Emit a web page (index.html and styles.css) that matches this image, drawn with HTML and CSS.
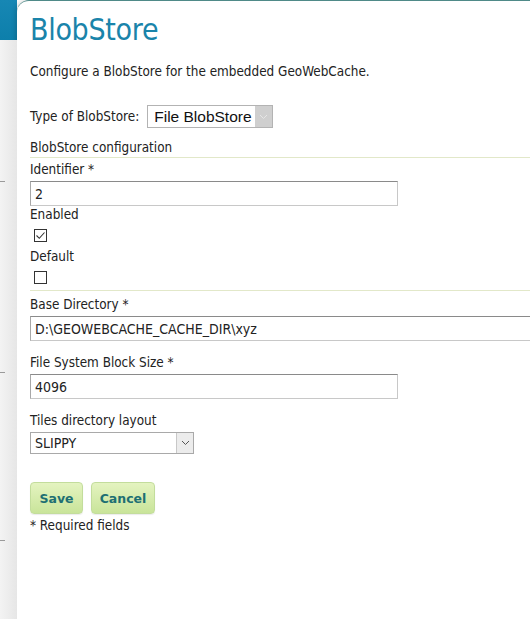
FILE: index.html
```html
<!DOCTYPE html>
<html>
<head>
<meta charset="utf-8">
<link rel="stylesheet" href="styles.css">
</head>
<body>
<div class="page">
  <aside class="rail">
    <div class="rail-head"></div>
    <div class="rail-body">
      <span class="tick t1"></span>
      <span class="tick t2"></span>
      <span class="tick t3"></span>
    </div>
  </aside>
  <main class="panel">
    <h1 class="title">BlobStore</h1>
    <p class="intro">Configure a BlobStore for the embedded GeoWebCache.</p>
    <div class="type-row">
      <span class="label">Type of BlobStore:</span>
      <div class="big-select">
        <span class="big-select-text">File BlobStore</span>
        <span class="big-select-btn">
          <svg width="9" height="6" viewBox="0 0 9 6"><path d="M1 1 L4.5 4.5 L8 1" fill="none" stroke="#e6e6e6" stroke-width="1"/></svg>
        </span>
      </div>
    </div>
    <div class="section-title">BlobStore configuration</div>
    <div class="section">
      <div class="field-label">Identifier *</div>
      <div class="input short">2</div>
      <div class="field-label">Enabled</div>
      <div class="check-wrap">
        <span class="checkbox">
          <svg width="11" height="11" viewBox="0 0 11 11"><path d="M1.5 5.5 L4.3 8.3 L9.5 2.5" fill="none" stroke="#333" stroke-width="1.1"/></svg>
        </span>
      </div>
      <div class="field-label">Default</div>
      <div class="check-wrap">
        <span class="checkbox"></span>
      </div>
    </div>
    <div class="section2">
      <div class="field-label">Base Directory *</div>
      <div class="input long">D:\GEOWEBCACHE_CACHE_DIR\xyz</div>
      <div class="field-label gap">File System Block Size *</div>
      <div class="input short">4096</div>
      <div class="field-label gap">Tiles directory layout</div>
      <div class="small-select">
        <span class="small-select-text">SLIPPY</span>
        <span class="small-select-btn">
          <svg width="9" height="6" viewBox="0 0 9 6"><path d="M1 1 L4.5 4.5 L8 1" fill="none" stroke="#555" stroke-width="1"/></svg>
        </span>
      </div>
    </div>
    <div class="buttons">
      <button class="btn btn-save">Save</button>
      <button class="btn btn-cancel">Cancel</button>
    </div>
    <div class="required">* Required fields</div>
  </main>
</div>
</body>
</html>
```

FILE: styles.css
```css
html, body {
  margin: 0;
  padding: 0;
  background: #ffffff;
  height: 100%;
  overflow: hidden;
}
.page {
  display: flex;
  width: 530px;
  height: 619px;
  font-family: "DejaVu Sans Condensed", "DejaVu Sans", sans-serif;
  font-size: 13.4px;
  color: #222;
}
.rail {
  width: 17px;
  flex: none;
  display: flex;
  flex-direction: column;
  background: #ededed;
}
.rail-head {
  height: 40px;
  background: linear-gradient(#1787b4, #0d7fab);
}
.rail-body {
  position: relative;
  flex: 1;
  background: linear-gradient(90deg, #f3f3f3, #e6e6e6);
}
.tick {
  position: absolute;
  left: 0;
  width: 5px;
  height: 1px;
  background: #9a9a9a;
}
.t1 { top: 141px; }
.t2 { top: 332px; }
.t3 { top: 500px; }
.panel {
  flex: 1;
  background: #fff;
  border-top: 1px solid #4f8a88;
  border-top-left-radius: 12px;
  box-shadow: -2px 0 4px rgba(0,0,0,0.15);
  padding: 0 0 0 13px;
  min-width: 0;
}
.title {
  margin: 11px 0 0 0;
  font-family: "DejaVu Sans Condensed", "DejaVu Sans", sans-serif;
  font-weight: normal;
  font-size: 30px;
  line-height: 36px;
  color: #1a84aa;
  letter-spacing: -0.3px;
}
.intro {
  margin: 15px 0 0 0;
  line-height: 17px;
}
.type-row {
  display: flex;
  align-items: center;
  margin-top: 25px;
}
.label {
  margin-right: 8px;
}
.big-select {
  display: flex;
  width: 124px;
  height: 21px;
  border: 1px solid #b3b3b3;
  background: #fff;
}
.big-select-text {
  flex: 1;
  font-family: "Liberation Sans", sans-serif;
  font-size: 15.5px;
  line-height: 21px;
  padding-left: 6px;
  color: #111;
  white-space: nowrap;
}
.big-select-btn {
  width: 17px;
  background: #cfcfcf;
  display: flex;
  align-items: center;
  justify-content: center;
}
.section-title {
  margin-top: 11px;
  line-height: 17px;
  padding-bottom: 1px;
  border-bottom: 1px solid #e2e8c9;
}
.section {
  padding-top: 3px;
  border-bottom: 1px solid #e2e8c9;
  padding-bottom: 0;
}
.field-label {
  line-height: 17px;
}
.input {
  box-sizing: border-box;
  border: 1px solid #c8c8c8;
  border-top-color: #8a8a8a;
  border-left-color: #a8a8a8;
  padding-left: 4px;
  margin-top: 3px;
  white-space: nowrap;
  overflow: hidden;
  font-size: 14px;
}
.short { width: 368px; height: 25px; line-height: 24px; }
.long { width: 510px; height: 25px; line-height: 24px; }
.check-wrap {
  height: 25px;
  display: flex;
  align-items: center;
  padding-left: 4px;
}
.checkbox {
  width: 11px;
  height: 11px;
  border: 1px solid #333;
  display: flex;
  align-items: center;
  justify-content: center;
  background: #fff;
}
.section2 {
  padding-top: 5px;
}
.gap { margin-top: 13px; }
.small-select {
  display: flex;
  width: 162px;
  height: 20px;
  border: 1px solid #a9a9a9;
  margin-top: 3px;
  background: #fff;
}
.small-select-text {
  flex: 1;
  padding-left: 4px;
  line-height: 20px;
  font-size: 14px;
}
.small-select-btn {
  width: 16px;
  border-left: 1px solid #c8c8c8;
  background: #ececec;
  display: flex;
  align-items: center;
  justify-content: center;
}
.buttons {
  display: flex;
  gap: 8px;
  margin-top: 28px;
}
.btn {
  height: 32px;
  border: 1px solid #c3dd9c;
  border-radius: 4px;
  background: linear-gradient(#e4f3c0, #c9e49a);
  color: #1e6f73;
  font-family: "DejaVu Sans", sans-serif;
  font-weight: bold;
  font-size: 12.5px;
  padding: 0;
  box-shadow: 0 1px 1px rgba(0,0,0,0.08);
}
.btn-save { width: 53px; }
.btn-cancel { width: 64px; }
.required {
  margin-top: 3px;
  line-height: 17px;
}
```
